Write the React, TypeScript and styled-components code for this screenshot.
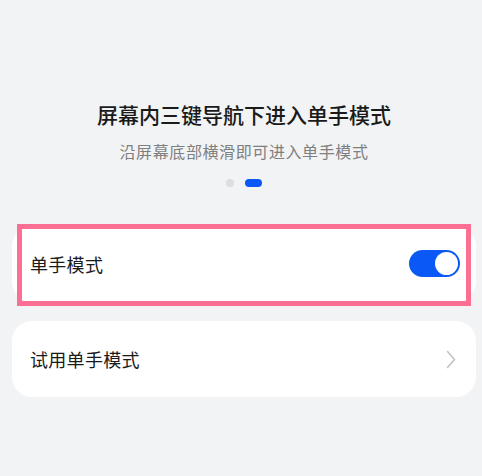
import React, { useState } from 'react'
import styled, { createGlobalStyle } from 'styled-components'

const COLORS = {
  page: '#f1f3f5',
  card: '#ffffff',
  text: '#1a1a1a',
  subText: '#7f7f7f',
  blue: '#0a59f7',
  dot: '#dcdde0',
  chevron: '#c2c2c2',
  highlight: '#fb6f92',
}

const GlobalStyle = createGlobalStyle`
  html, body {
    margin: 0;
    padding: 0;
    background: ${COLORS.page};
  }
  body {
    font-family: "Noto Sans CJK SC", "Noto Sans", sans-serif;
    -webkit-font-smoothing: antialiased;
  }
`

const StyledPage = styled.div`
  min-height: 476px;
  box-sizing: border-box;
  padding: 100px 6px 0 12px;
  display: flex;
  flex-direction: column;
`

const StyledIntro = styled.div`
  display: flex;
  flex-direction: column;
  align-items: center;
`

const StyledTitle = styled.div`
  font-size: 21px;
  line-height: 28px;
  font-weight: 500;
  color: ${COLORS.text};
`

const StyledSubtitle = styled.div`
  margin-top: 12px;
  font-size: 16px;
  line-height: 22px;
  letter-spacing: 0.6px;
  color: ${COLORS.subText};
`

const StyledDots = styled.div`
  margin-top: 17px;
  display: flex;
  align-items: center;
  gap: 11px;
  height: 8px;
`

const StyledDot = styled.span<{ $active?: boolean }>`
  display: block;
  height: 8px;
  width: ${(p) => (p.$active ? '17px' : '8px')};
  border-radius: 4px;
  background: ${(p) => (p.$active ? COLORS.blue : COLORS.dot)};
`

const StyledList = styled.div`
  margin-top: 39px;
  display: flex;
  flex-direction: column;
  gap: 19px;
`

const StyledCard = styled.div<{ $pad?: number }>`
  position: relative;
  height: 76px;
  box-sizing: border-box;
  padding: 0 ${(p) => p.$pad ?? 16}px 0 18px;
  background: ${COLORS.card};
  border-radius: 20px;
  display: flex;
  align-items: center;
  justify-content: space-between;
`

const StyledLabel = styled.span`
  font-size: 18px;
  line-height: 24px;
  letter-spacing: 0.3px;
  color: ${COLORS.text};
`

const StyledHighlight = styled.div`
  position: absolute;
  top: -2px;
  bottom: -4px;
  left: 5px;
  right: 5px;
  border: 5px solid ${COLORS.highlight};
  pointer-events: none;
`

const StyledSwitch = styled.button<{ $on: boolean }>`
  position: relative;
  width: 51px;
  height: 27px;
  margin-top: -1px;
  padding: 0;
  border: none;
  border-radius: 14px;
  background: ${(p) => (p.$on ? COLORS.blue : '#d5d6d8')};
  cursor: pointer;

  &::after {
    content: '';
    position: absolute;
    top: 2px;
    left: ${(p) => (p.$on ? '26px' : '2px')};
    width: 23px;
    height: 23px;
    border-radius: 50%;
    background: #fff;
  }
`

function Chevron() {
  return (
    <svg width="10" height="19" viewBox="0 0 10 19" fill="none">
      <path
        d="M1.5 1.5 L8.5 9.5 L1.5 17.5"
        stroke={COLORS.chevron}
        strokeWidth="1.6"
        strokeLinecap="round"
        strokeLinejoin="round"
      />
    </svg>
  )
}

export default function App() {
  const [on, setOn] = useState(true)
  return (
    <>
      <GlobalStyle />
      <StyledPage>
        <StyledIntro>
          <StyledTitle>屏幕内三键导航下进入单手模式</StyledTitle>
          <StyledSubtitle>沿屏幕底部横滑即可进入单手模式</StyledSubtitle>
          <StyledDots>
            <StyledDot />
            <StyledDot $active />
          </StyledDots>
        </StyledIntro>
        <StyledList>
          <StyledCard>
            <StyledLabel>单手模式</StyledLabel>
            <StyledSwitch $on={on} onClick={() => setOn(!on)} aria-label="单手模式" />
            <StyledHighlight />
          </StyledCard>
          <StyledCard $pad={20}>
            <StyledLabel>试用单手模式</StyledLabel>
            <Chevron />
          </StyledCard>
        </StyledList>
      </StyledPage>
    </>
  )
}
